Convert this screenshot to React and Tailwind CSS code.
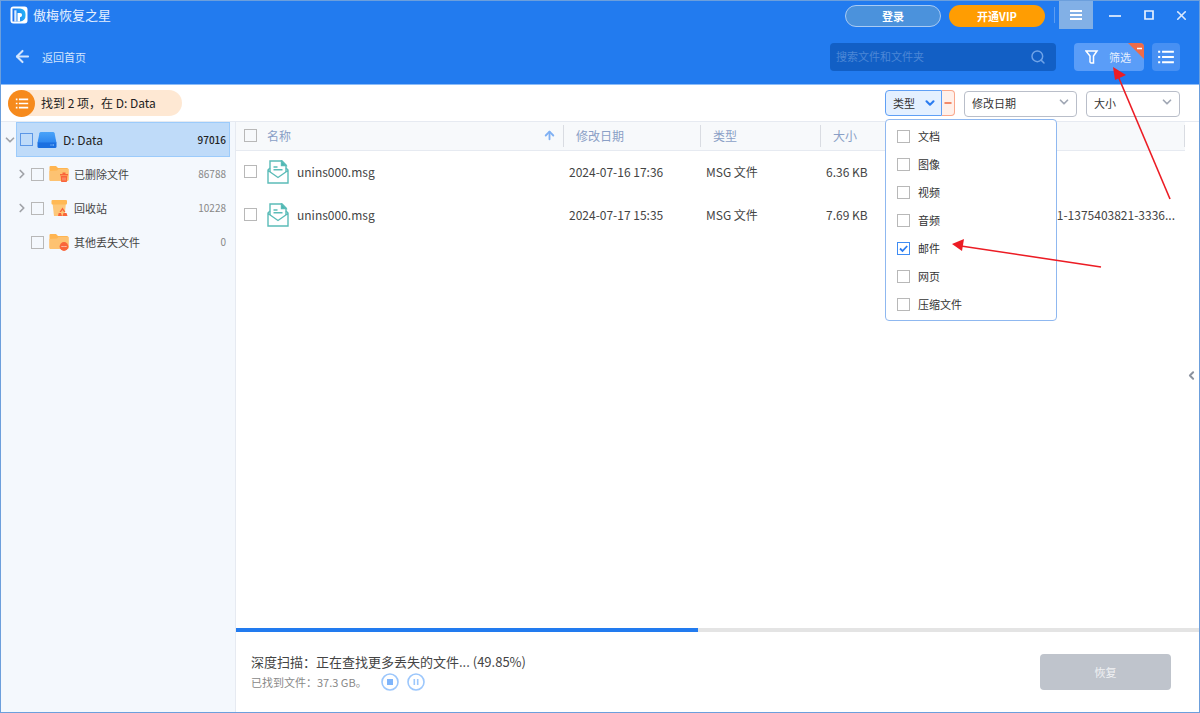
import { useState } from 'react';
import { ArrowLeft, ArrowUp, ChevronDown, ChevronLeft, ChevronRight, Minus, Search, X } from 'lucide-react';

const treeItems = [
  { name: '已删除文件', count: 86788, icon: 'deleted', open: true },
  { name: '回收站', count: 10228, icon: 'recycle', open: true },
  { name: '其他丢失文件', count: 0, icon: 'lost', open: false },
];

const files = [
  { name: 'unins000.msg', date: '2024-07-16 17:36', type: 'MSG 文件', size: '6.36 KB', path: '' },
  { name: 'unins000.msg', date: '2024-07-17 15:35', type: 'MSG 文件', size: '7.69 KB', path: 'S-1-5-21-1375403821-3336...' },
];

const typeOptions = ['文档', '图像', '视频', '音频', '邮件', '网页', '压缩文件'];

const Checkbox = ({ id, label, checked, onChange, color = 'border-[#b8b8b8]' }) => (
  <span className="relative grid size-[13px] shrink-0">
    <input
      type="checkbox"
      id={id}
      aria-label={label}
      checked={checked}
      defaultChecked={onChange ? undefined : false}
      onChange={onChange}
      className={`peer size-[13px] appearance-none border bg-transparent checked:border-[#3f8cf3] ${color}`}
    />
    <svg viewBox="0 0 13 13" className="pointer-events-none absolute inset-0 hidden size-[13px] peer-checked:block" fill="none" stroke="#2b7cf0" strokeWidth="1.8">
      <path d="M3 6.5l2.5 2.5L10.2 4" />
    </svg>
  </span>
);

const Logo = () => (
  <svg viewBox="0 0 18 18" className="size-[18px]">
    <defs>
      <linearGradient id="logo" x1="0" y1="0.6" x2="1" y2="0.4">
        <stop offset="0" stopColor="#1f6ff0" />
        <stop offset="1" stopColor="#22b4f5" />
      </linearGradient>
    </defs>
    <rect x="0.5" y="0.5" width="17" height="17" rx="3" fill="#fff" />
    <path d="M2.500 2.500H10a5.500 5.500 0 0 1 5.500 5.500v1.500a5.500 5.500 0 0 1-5.500 6H2.500z" fill="url(#logo)" />
    <path d="M4.300 4.300h2.200v11.200H4.300z" fill="#fff" opacity="0.85" />
    <path d="M7.500 15.500V7h2.500a2 2 0 0 1 0 4.200v4.300z" fill="#fff" />
  </svg>
);

const DriveIcon = () => (
  <svg viewBox="0 0 20 18" className="h-[18px] w-5 shrink-0">
    <defs>
      <linearGradient id="drive" x1="0" y1="0" x2="0" y2="1">
        <stop offset="0" stopColor="#4aa3f9" />
        <stop offset="1" stopColor="#2d86ef" />
      </linearGradient>
    </defs>
    <path d="M4 1h12q1.300 0 1.600 1.300L19.500 12H.5L2.400 2.300Q2.700 1 4 1z" fill="url(#drive)" />
    <path d="M.5 11.500h19V15.500q0 1.500-1.500 1.500H2Q.5 17 .5 15.500z" fill="#1b6fe0" />
    <path d="M13.500 14h1M15.500 14h1.500" stroke="#9fd0ff" strokeWidth="1.200" />
  </svg>
);

const TreeIcon = ({ kind }) => {
  if (kind === 'recycle') {
    return (
      <svg viewBox="0 0 20 18" className="h-[18px] w-5 shrink-0">
        <path d="M3.500 4h13.500l-1.500 13H5z" fill="#fdc779" />
        <rect x="2.500" y="1" width="15.500" height="4.500" rx="1" fill="#ffb955" />
        <path d="M13.500 8.500l3 4.500H15l-1.500-2-1.500 2h-1.500zM9.700 14l2.300 0 1 3H9zM14.500 14h3l1 3h-5z" fill="#f9653a" />
      </svg>
    );
  }
  return (
    <svg viewBox="0 0 20 18" className="h-[18px] w-5 shrink-0">
      <path d="M.5 2Q.5 1 1.500 1H7l2 2h9q1.500 0 1.500 1.500v10q0 1.500-1.500 1.500H2Q.5 16 .5 14.500z" fill="#ffb551" />
      <path d="M.5 6L8 5.500 9.500 4h10v10.500q0 1.500-1.500 1.500H2Q.5 16 .5 14.500z" fill="#fdc271" />
      {kind === 'deleted' ? (
        <>
          <path d="M11 9h8v1.500h-8zM13.500 7.500h3V9h-3zM11.700 11h6.600l-.5 6h-5.600z" fill="#f9653a" />
          <path d="M14 12.500v3M16 12.500v3" stroke="#ffc3a8" strokeWidth="0.700" />
        </>
      ) : (
        <>
          <circle cx="15" cy="13.500" r="4.400" fill="#f9653a" />
          <path d="M12.500 13.500h5" stroke="#ffd9c9" strokeWidth="1.200" strokeDasharray="1.200 0.700" />
        </>
      )}
    </svg>
  );
};

const MailIcon = () => (
  <svg viewBox="0 0 22 24" className="h-6 w-[22px] shrink-0" fill="none" stroke="#5bbcb8" strokeWidth="1.400">
    <path d="M3 12V1h12l4 4v7" />
    <path d="M14.500 1v4.500H19z" fill="#45b5b1" />
    <path d="M3 8L1 10v13h20V10l-2-2M1 10.500l10 7 10-7" />
    <path d="M6.500 7h4M6.500 9.800h9" />
  </svg>
);

const ListIcon = ({ className }) => (
  <svg viewBox="0 0 18 16" className={className} fill="none" stroke="currentColor" strokeWidth="2.200">
    <path d="M0 2h2.400M0 8h2.400M0 14h2.400M4.500 2H18M4.500 8H18M4.500 14H18" />
  </svg>
);

const FilterSelect = ({ label, width }) => (
  <div className={`relative ${width}`}>
    <select aria-label={label} className="h-[26px] w-full appearance-none rounded border border-[#b9bec9] bg-white pl-[7px] text-[11px] text-[#333]">
      <option>{label}</option>
    </select>
    <ChevronDown size={14} strokeWidth={3} className="pointer-events-none absolute top-1.5 right-1.5 text-[#a0a7b4]" />
  </div>
);

const Header = () => (
  <header className="border-b border-[#8cbcf8] bg-[#227bef] text-white">
    {/* Barra de título */}
    <div className="flex h-7 items-center pr-2.5 pl-[9px]">
      <Logo />
      <h1 className="ml-[5px] text-[13px] leading-4 text-[#e4effe]">傲梅恢复之星</h1>
      <button className="mt-0.5 ml-auto h-[22px] w-24 rounded-full border border-[#a9cbf4] bg-[#4b92dc] text-[11px] leading-4 font-bold">登录</button>
      <button className="mt-0.5 ml-2 h-[22px] w-24 rounded-full bg-[#ff9d02] text-[11px] leading-4 font-bold">开通VIP</button>
      <span className="ml-[9px] h-4 w-px bg-[#5c9df3]" />
      <button aria-label="菜单" className="ml-1 grid h-7 w-[34px] place-items-center bg-[#82b0e6]">
        <svg viewBox="0 0 12 10" className="h-2.5 w-3" stroke="#fff" strokeWidth="1.800"><path d="M0 1h12M0 5h12M0 9h12" /></svg>
      </button>
      <button aria-label="最小化" className="ml-4"><svg viewBox="0 0 12 12" className="size-3" stroke="#dbe9fd" strokeWidth="1.800"><path d="M0 7h12" /></svg></button>
      <button aria-label="最大化" className="ml-[22px]"><svg viewBox="0 0 12 12" className="size-3" fill="none" stroke="#e6f0fe" strokeWidth="1.700"><path d="M2 2h8v8H2z" /></svg></button>
      <button aria-label="关闭" className="ml-[19px]"><X size={15} strokeWidth={2.6} className="text-[#dbe9fd]" /></button>
    </div>
    <div className="flex h-[55px] items-center pr-[19px] pl-3">
      <a href="#" className="flex items-center text-[11px] leading-4 text-[#d3e5fd]">
        <ArrowLeft size={19} strokeWidth={2.6} className="mr-2.5" />
        返回首页
      </a>
      <div className="ml-auto flex h-7 w-[226px] items-center rounded bg-[#125fc5] pr-2.5 pl-1.5">
        <input aria-label="搜索" placeholder="搜索文件和文件夹" className="min-w-0 flex-1 bg-transparent text-[11px] outline-none placeholder:text-[#4c87d6]" />
        <Search size={16} strokeWidth={2.2} className="text-[#6fa3e8]" />
      </div>
      <button className="relative ml-[18px] flex h-7 w-[70px] items-center overflow-hidden rounded bg-[#5a9df8] pl-[11px] text-[11px] leading-4 text-[#e4effe]">
        <svg viewBox="0 0 14 14" className="mr-2.5 size-[14px]" fill="none" stroke="#fff" strokeWidth="1.500"><path d="M1 1h11L8.500 6v7H6L5 12V6z" /></svg>
        筛选
        <svg viewBox="0 0 16 16" className="absolute top-0 right-0 size-4"><path d="M0 0h16v16z" fill="#ee6b49" /><path d="M9 5.500h5" stroke="#fff" strokeWidth="1.500" /></svg>
      </button>
      <button aria-label="列表视图" className="ml-2 grid size-7 place-items-center rounded bg-[#4790f3]">
        <ListIcon className="h-[14px] w-4" />
      </button>
    </div>
  </header>
);

const TypeFilter = () => {
  const [open, setOpen] = useState(true);
  const [selected, setSelected] = useState(['邮件']);

  const toggle = (name) => {
    setSelected(selected.includes(name) ? selected.filter((s) => s !== name) : [...selected, name]);
  };

  return (
    <div className="relative flex">
      <button onClick={() => setOpen(!open)} className="flex h-[26px] w-[57px] items-center justify-between rounded-l border border-[#5f9ff5] bg-[#e4f0ff] pr-1 pl-[7px] text-[11px] leading-4 text-[#333]">
        类型
        <ChevronDown size={14} strokeWidth={3.6} className="text-[#2b7cf0]" />
      </button>
      <button aria-label="清除" onClick={() => setSelected([])} className="grid h-[26px] w-[13px] place-items-center rounded-r border border-l-0 border-[#f9a78c] bg-[#fff0ea]">
        <Minus size={10} strokeWidth={4} className="text-[#f0683f]" />
      </button>
      {open && (
        <ul className="absolute top-[29px] left-0 z-10 w-[172px] rounded border border-[#8fb8f0] bg-white py-0.5">
          {typeOptions.map((name, i) => (
            <li key={name} className="flex h-7 items-center gap-2 pl-[11px] text-[11px] leading-4 text-[#333]">
              <Checkbox id={`type-${i}`} checked={selected.includes(name)} onChange={() => toggle(name)} />
              <label htmlFor={`type-${i}`}>{name}</label>
            </li>
          ))}
        </ul>
      )}
    </div>
  );
};

const Sidebar = () => (
  <aside className="w-[235px] shrink-0 border-r border-[#e6eaf1] bg-[#f4f8fd]">
    <div className="flex h-[35px] items-center pr-[5px] pl-0.5">
      <button aria-label="折叠" className="w-[13px]"><ChevronDown size={14} strokeWidth={3} className="text-[#a0a3a8]" /></button>
      <div className="flex h-full min-w-0 flex-1 items-center border border-[#9ccbfb] bg-[#bfdbf9] pr-[3px] pl-[3px]">
        <Checkbox id="drive-d" color="border-[#5b96e6]" />
        <span className="ml-1 flex"><DriveIcon /></span>
        <label htmlFor="drive-d" className="ml-1.5 text-[12px] leading-4 text-[#222]">D: Data</label>
        <span className="ml-auto text-[10px] leading-4 font-medium text-[#222]">97016</span>
      </div>
    </div>
    {treeItems.map((item) => (
      <div key={item.name} className="flex h-[34px] items-center pr-[9px] pl-[14px] leading-4">
        <span className="w-4">
          {item.open && <button aria-label="展开" className="block"><ChevronRight size={14} strokeWidth={3} className="text-[#a0a3a8]" /></button>}
        </span>
        <Checkbox id={item.icon} />
        <span className="ml-[5px] flex"><TreeIcon kind={item.icon} /></span>
        <label htmlFor={item.icon} className="ml-[5px] text-[11px] text-[#444]">{item.name}</label>
        <span className="ml-auto text-[10px] text-[#888]">{item.count}</span>
      </div>
    ))}
  </aside>
);

const FileTable = () => (
  <table className="w-full table-fixed text-left text-[12px] leading-4 text-[#444]">
    <colgroup>
      <col className="w-[328px]" />
      <col className="w-[137px]" />
      <col className="w-[120px]" />
      <col className="w-[80px]" />
      <col />
    </colgroup>
    <thead>
      <tr className="h-7 border-b border-[#e6eaf1] bg-[#f7f9fb] text-[#8a9fc6]">
        <th className="font-normal">
          <div className="flex h-[22px] items-center border-r border-[#d9dce2] pr-[7px] pl-2">
            <Checkbox label="全选" />
            <span className="ml-2.5 flex-1">名称</span>
            <ArrowUp size={13} strokeWidth={3.4} className="text-[#7fb0f3]" />
          </div>
        </th>
        <th className="font-normal"><div className="flex h-[22px] items-center border-r border-[#d9dce2] pl-3">修改日期</div></th>
        <th className="font-normal"><div className="flex h-[22px] items-center border-r border-[#d9dce2] pl-3">类型</div></th>
        <th className="font-normal"><div className="flex h-[22px] items-center pl-3">大小</div></th>
        <th><div className="h-[22px] border-r border-[#d9dce2]" /></th>
      </tr>
    </thead>
    <tbody>
      {files.map((file) => (
        <tr key={file.date} className="h-[43px]">
          <td>
            <div className="flex items-center pl-2">
              <Checkbox label={file.name} />
              <span className="ml-2.5 flex"><MailIcon /></span>
              <span className="ml-2">{file.name}</span>
            </div>
          </td>
          <td className="pl-[5px]">{file.date}</td>
          <td className="pl-[5px]">{file.type}</td>
          <td className="pl-[5px]">{file.size}</td>
          <td className="pr-2.5 text-right">{file.path}</td>
        </tr>
      ))}
    </tbody>
  </table>
);

const Footer = () => (
  <footer>
    <div className="h-1 bg-[#e4e4e4]">
      <div className="h-full w-[48%] bg-[#227bef]" />
    </div>
    <div className="flex h-20 items-center justify-between pr-7 pl-[15px]">
      <div>
        <p className="text-[13px] leading-5 text-[#444]">深度扫描：正在查找更多丢失的文件... (49.85%)</p>
        <div className="flex items-center text-[11px] leading-5 text-[#888]">
          已找到文件：37.3 GB。
          <button aria-label="停止" className="ml-3.5">
            <svg viewBox="0 0 18 18" className="size-[18px]" fill="none" stroke="#9cc7fc" strokeWidth="1.600"><circle cx="9" cy="9" r="8" /><path d="M6 6h6v6H6z" fill="#7fb5fb" stroke="none" /></svg>
          </button>
          <button aria-label="暂停" className="ml-2">
            <svg viewBox="0 0 18 18" className="size-[18px]" fill="none" stroke="#9cc7fc" strokeWidth="1.600"><circle cx="9" cy="9" r="8" /><path d="M7.300 6v6M10.700 6v6" /></svg>
          </button>
        </div>
      </div>
      <button className="h-9 w-[131px] rounded bg-[#bfc4cc] text-[11px] leading-4 text-[#f1f2f4]">恢复</button>
    </div>
  </footer>
);

const Arrows = () => (
  <svg className="pointer-events-none absolute top-0 left-0 z-20 h-[300px] w-[1200px]" stroke="#ec1c24" strokeWidth="1.600" fill="#ec1c24">
    <path d="M1169 198L1117 75" />
    <path d="M1112 66l13 8-11 5z" stroke="none" />
    <path d="M1100 266L960 245" />
    <path d="M951 243l12-5-2 12z" stroke="none" />
  </svg>
);

const App = () => (
  <div className="relative flex min-h-screen flex-col border border-[#6c9fdc] bg-white font-['Noto_Sans_CJK_SC',sans-serif]">
    <Header />
    <div className="flex h-[37px] items-center gap-[9px] border-b border-[#e6eaf1] pr-[19px] pl-[7px]">
      <div className="mr-auto flex h-[26px] items-center rounded-full bg-[#fee8d3] pr-[26px] text-[12px] leading-4 text-[#222]">
        <span className="mr-1.5 grid size-[27px] place-items-center rounded-full bg-[#f68a1c] text-white">
          <ListIcon className="h-[11px] w-[14px]" />
        </span>
        找到 2 项，在 D: Data
      </div>
      <TypeFilter />
      <FilterSelect label="修改日期" width="w-[113px]" />
      <FilterSelect label="大小" width="w-[94px]" />
    </div>
    <div className="flex flex-1">
      <Sidebar />
      <main className="flex min-w-0 flex-1 flex-col">
        <div className="flex flex-1">
          <div className="min-w-0 flex-1"><FileTable /></div>
          <button aria-label="预览" className="w-[14px]"><ChevronLeft size={13} strokeWidth={3.6} className="text-[#8b929e]" /></button>
        </div>
        <Footer />
      </main>
    </div>
    <Arrows />
  </div>
);

export default App;
